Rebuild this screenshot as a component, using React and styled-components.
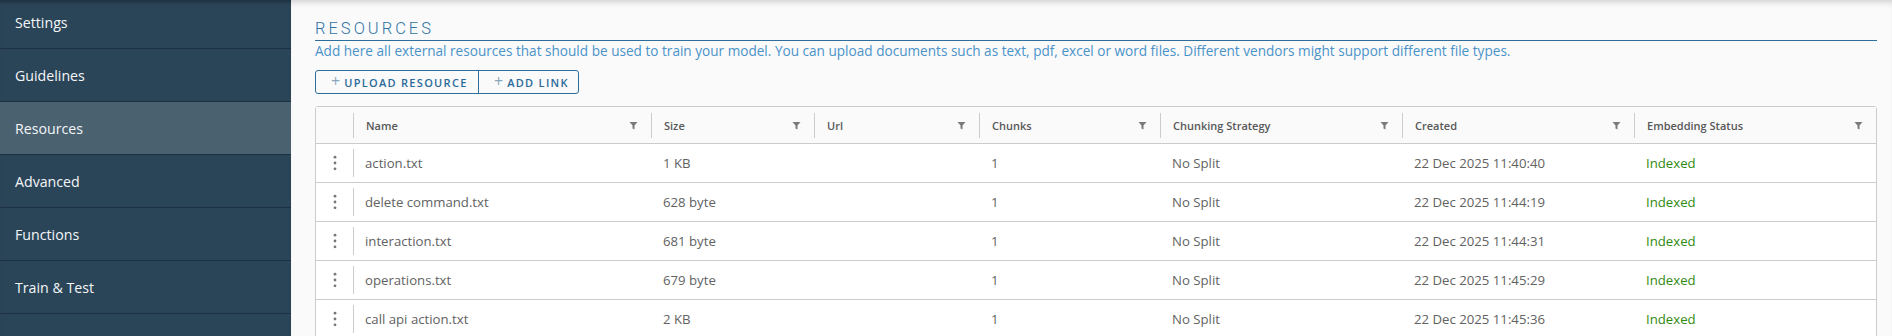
import React from "react";
import styled, { createGlobalStyle } from "styled-components";

const Global = createGlobalStyle`
  html, body { margin: 0; padding: 0; }
  body {
    font-family: "Open Sans", "Noto Sans", sans-serif;
    background: #fafafa;
    overflow: hidden;
  }
  * { box-sizing: border-box; }
`;

const Layout = styled.div`
  display: flex;
  width: 1892px;
  height: 336px;
  overflow: hidden;
`;

const Sidebar = styled.nav`
  width: 291px;
  flex: none;
  background: #2b4558;
  display: flex;
  flex-direction: column;
  box-shadow: inset 0 5px 4px -3px rgba(0, 0, 0, 0.35);
  overflow: hidden;
`;

const NavList = styled.div`
  margin-top: -4px;
  display: flex;
  flex-direction: column;
`;

const NavItem = styled.div`
  height: 53px;
  flex: none;
  display: flex;
  align-items: center;
  padding-left: 15px;
  border-bottom: 1px solid #1d3142;
  background: ${(p) => (p.$active ? "#4a6170" : "transparent")};
  color: #f4f6f8;
  font-size: 14.2px;
  font-family: "Open Sans", sans-serif;
`;

const Main = styled.main`
  flex: 1;
  min-width: 0;
  padding: 17px 15px 0 24px;
  background: #fafafa;
  box-shadow: inset 0 6px 6px -4px rgba(0, 0, 0, 0.18);
`;

const Title = styled.h2`
  margin: 0;
  font-family: Roboto, "Open Sans", sans-serif;
  font-size: 16.5px;
  line-height: 23px;
  font-weight: 300;
  letter-spacing: 3px;
  color: #2f74a6;
  border-bottom: 1px solid #2f6d9b;
`;

const Description = styled.p`
  margin: 0;
  font-size: 13.6px;
  line-height: 19px;
  color: #4a93c9;
  white-space: nowrap;
`;

const ButtonGroup = styled.div`
  display: inline-flex;
  margin-top: 10px;
  border: 1px solid #2c6e9e;
  border-radius: 3px;
  overflow: hidden;
`;

const GroupButton = styled.button`
  height: 22px;
  display: flex;
  align-items: center;
  gap: 4px;
  padding: 0 10px 0 15px;
  width: ${(p) => p.$w}px;
  border: none;
  border-left: ${(p) => (p.$first ? "none" : "1px solid #2c6e9e")};
  background: transparent;
  color: #2a6a9a;
  font-family: "Open Sans", sans-serif;
  font-size: 11px;
  font-weight: 600;
  letter-spacing: 1.3px;
  white-space: nowrap;
  cursor: pointer;
`;

const Plus = styled.span`
  color: #8aa6bd;
  font-size: 16px;
  font-weight: 400;
  letter-spacing: 0;
  line-height: 1;
  margin-top: -2px;
`;

const Table = styled.div`
  margin-top: 12px;
  border: 1px solid #cccccc;
  border-radius: 3px;
  background: #fff;
`;

const cols = "37px 298px 163px 165px 181px 242px 232px 1fr";

const HeaderRow = styled.div`
  display: grid;
  grid-template-columns: ${cols};
  height: 37px;
  background: #fafafa;
  border-bottom: 1px solid #cccccc;
`;

const HeaderCell = styled.div`
  align-self: center;
  height: 25px;
  display: flex;
  align-items: center;
  justify-content: space-between;
  padding: 0 13px 0 12px;
  border-left: ${(p) => (p.$noSep ? "none" : "1px solid #cccccc")};
  font-size: 11px;
  font-weight: 600;
  color: #585858;
  white-space: nowrap;
`;

const BodyRow = styled.div`
  display: grid;
  grid-template-columns: ${cols};
  height: 39px;
  border-bottom: 1px solid #cccccc;
  background: #fff;
`;

const ActionCell = styled.div`
  align-self: center;
  height: 28px;
  display: flex;
  align-items: center;
  justify-content: center;
  border-right: 1px solid #cccccc;
  margin-right: -1px;
`;

const Cell = styled.div`
  display: flex;
  align-items: center;
  padding-left: 12px;
  font-size: 13.2px;
  font-variant-numeric: tabular-nums;
  color: ${(p) => (p.$status ? "#2f8a10" : "#626262")};
  white-space: nowrap;
`;

const FilterIcon = () => (
  <svg width="9" height="9" viewBox="0 0 9 9">
    <path d="M0.5 1h8l-3 3.4v4L3.5 7.4V4.4z" fill="#7a7a7a" />
  </svg>
);

const Kebab = () => (
  <svg width="4" height="16" viewBox="0 0 4 16">
    <circle cx="2" cy="2.2" r="1.4" fill="#777" />
    <circle cx="2" cy="8" r="1.4" fill="#777" />
    <circle cx="2" cy="13.8" r="1.4" fill="#777" />
  </svg>
);

const navItems = ["Settings", "Guidelines", "Resources", "Advanced", "Functions", "Train & Test", ""];

const headers = ["Name", "Size", "Url", "Chunks", "Chunking Strategy", "Created", "Embedding Status"];

const rows = [
  ["action.txt", "1 KB", "", "1", "No Split", "22 Dec 2025 11:40:40", "Indexed"],
  ["delete command.txt", "628 byte", "", "1", "No Split", "22 Dec 2025 11:44:19", "Indexed"],
  ["interaction.txt", "681 byte", "", "1", "No Split", "22 Dec 2025 11:44:31", "Indexed"],
  ["operations.txt", "679 byte", "", "1", "No Split", "22 Dec 2025 11:45:29", "Indexed"],
  ["call api action.txt", "2 KB", "", "1", "No Split", "22 Dec 2025 11:45:36", "Indexed"],
];

export default function App() {
  return (
    <>
      <Global />
      <Layout>
        <Sidebar>
          <NavList>
            {navItems.map((n, i) => (
              <NavItem key={i} $active={n === "Resources"}>
                {n}
              </NavItem>
            ))}
          </NavList>
        </Sidebar>
        <Main>
          <Title>RESOURCES</Title>
          <Description>
            Add here all external resources that should be used to train your model. You can upload
            documents such as text, pdf, excel or word files. Different vendors might support
            different file types.
          </Description>
          <ButtonGroup>
            <GroupButton $first $w={162}>
              <Plus>+</Plus>UPLOAD RESOURCE
            </GroupButton>
            <GroupButton $w={100}>
              <Plus>+</Plus>ADD LINK
            </GroupButton>
          </ButtonGroup>
          <Table>
            <HeaderRow>
              <HeaderCell $noSep />
              {headers.map((h) => (
                <HeaderCell key={h}>
                  <span>{h}</span>
                  <FilterIcon />
                </HeaderCell>
              ))}
            </HeaderRow>
            {rows.map((r, i) => (
              <BodyRow key={i}>
                <ActionCell>
                  <Kebab />
                </ActionCell>
                {r.map((c, j) => (
                  <Cell key={j} $status={j === 6}>
                    {c}
                  </Cell>
                ))}
              </BodyRow>
            ))}
          </Table>
        </Main>
      </Layout>
    </>
  );
}
